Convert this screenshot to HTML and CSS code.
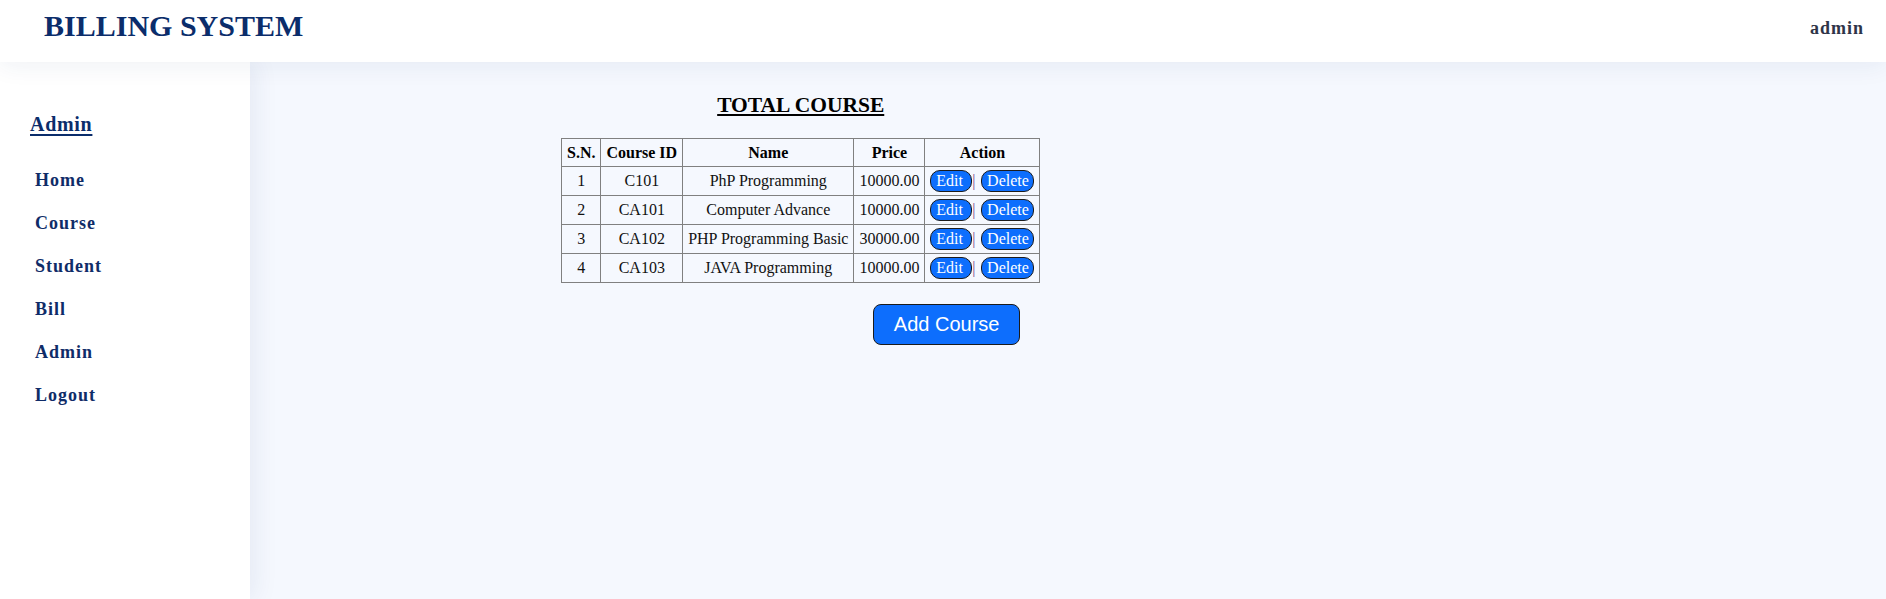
FILE: index.html
```html
<!DOCTYPE html>
<html lang="en">
<head>
<meta charset="utf-8">
<title>Billing System</title>
<link rel="stylesheet" href="styles.css">
</head>
<body>
<div class="layout">
  <header class="topbar">
    <div class="brand">BILLING SYSTEM</div>
    <div class="user">admin</div>
  </header>
  <div class="content">
    <aside class="sidebar">
      <div class="side-title">Admin</div>
      <nav class="menu">
        <a class="menu-item" href="#">Home</a>
        <a class="menu-item" href="#">Course</a>
        <a class="menu-item" href="#">Student</a>
        <a class="menu-item" href="#">Bill</a>
        <a class="menu-item" href="#">Admin</a>
        <a class="menu-item" href="#">Logout</a>
      </nav>
    </aside>
    <main class="main">
      <div class="panel">
        <h2 class="panel-title">TOTAL COURSE</h2>
        <table class="grid">
          <thead>
            <tr><th>S.N.</th><th>Course ID</th><th>Name</th><th>Price</th><th>Action</th></tr>
          </thead>
          <tbody>
            <tr><td>1</td><td>C101</td><td>PhP Programming</td><td>10000.00</td><td><button class="btn btn-edit">Edit</button><span class="sep">|</span> <button class="btn">Delete</button></td></tr>
            <tr><td>2</td><td>CA101</td><td>Computer Advance</td><td>10000.00</td><td><button class="btn btn-edit">Edit</button><span class="sep">|</span> <button class="btn">Delete</button></td></tr>
            <tr><td>3</td><td>CA102</td><td>PHP Programming Basic</td><td>30000.00</td><td><button class="btn btn-edit">Edit</button><span class="sep">|</span> <button class="btn">Delete</button></td></tr>
            <tr><td>4</td><td>CA103</td><td>JAVA Programming</td><td>10000.00</td><td><button class="btn btn-edit">Edit</button><span class="sep">|</span> <button class="btn">Delete</button></td></tr>
          </tbody>
        </table>
        <div class="actions">
          <button class="btn-add">Add Course</button>
        </div>
      </div>
    </main>
  </div>
</div>
</body>
</html>
```
FILE: styles.css
```css
html, body {
  margin: 0;
  padding: 0;
}
body {
  font-family: "Liberation Serif", "Times New Roman", serif;
  background: #f5f8fe;
  color: #000;
}
.layout {
  display: flex;
  flex-direction: column;
  min-height: 100vh;
}
.topbar {
  position: relative;
  z-index: 2;
  height: 62px;
  box-sizing: border-box;
  background: #fff;
  display: flex;
  justify-content: space-between;
  align-items: flex-start;
  padding: 0 22px 0 44px;
  box-shadow: 0 4px 24px rgba(30, 50, 110, 0.07);
}
.brand {
  font-size: 30px;
  line-height: 30px;
  font-weight: bold;
  color: #0b2d6b;
  padding-top: 11px;
}
.user {
  font-size: 18px;
  line-height: 18px;
  font-weight: bold;
  letter-spacing: 1px;
  color: #2e3448;
  padding-top: 19px;
}
.content {
  flex: 1;
  display: flex;
}
.sidebar {
  position: relative;
  z-index: 1;
  width: 250px;
  flex: 0 0 250px;
  background: #fff;
  box-sizing: border-box;
  padding: 52px 0 0 30px;
  box-shadow: 4px 0 24px rgba(30, 50, 110, 0.08);
}
.side-title {
  font-size: 20px;
  line-height: 20px;
  font-weight: bold;
  letter-spacing: 0.7px;
  color: #0b2d6b;
  text-decoration: underline;
  text-decoration-thickness: 2px;
  text-underline-offset: 3px;
  margin-bottom: 25px;
}
.menu {
  display: flex;
  flex-direction: column;
  padding-left: 5px;
}
.menu-item {
  display: block;
  font-size: 18px;
  line-height: 43px;
  font-weight: bold;
  letter-spacing: 1px;
  color: #0f2c68;
  text-decoration: none;
}
.main {
  flex: 1;
  padding: 31px 0 0 311px;
}
.panel {
  display: inline-block;
}
.panel-title {
  margin: 0 0 20px;
  font-size: 21.5px;
  font-weight: bold;
  text-align: center;
  text-decoration: underline;
  color: #000;
}
.grid {
  border-collapse: collapse;
  font-size: 16px;
  color: #111;
}
.grid th, .grid td {
  border: 1px solid #808080;
  text-align: center;
  white-space: nowrap;
}
.grid th {
  padding: 4.5px 5px;
  font-weight: bold;
  color: #000;
}
.grid td {
  padding: 3px 5px;
}
.btn {
  font-family: "Liberation Serif", "Times New Roman", serif;
  font-size: 16px;
  line-height: 18px;
  color: #fff;
  background: #0d6efd;
  border: 1px solid #1b1b1b;
  border-radius: 10px;
  padding: 1px 4.6px;
  margin: 0;
  cursor: pointer;
}
.btn-edit {
  padding: 1px 8.3px 1px 4.9px;
}
.sep {
  color: #7a4a86;
  margin-right: 2px;
}
.actions {
  display: flex;
  justify-content: flex-end;
  padding-right: 20px;
  margin-top: 21px;
}
.btn-add {
  font-family: "Liberation Sans", Arial, sans-serif;
  font-size: 20px;
  line-height: 23px;
  color: #fff;
  background: #0d6efd;
  border: 1px solid #1b1b1b;
  border-radius: 8px;
  padding: 8px 20px;
  cursor: pointer;
}
```
